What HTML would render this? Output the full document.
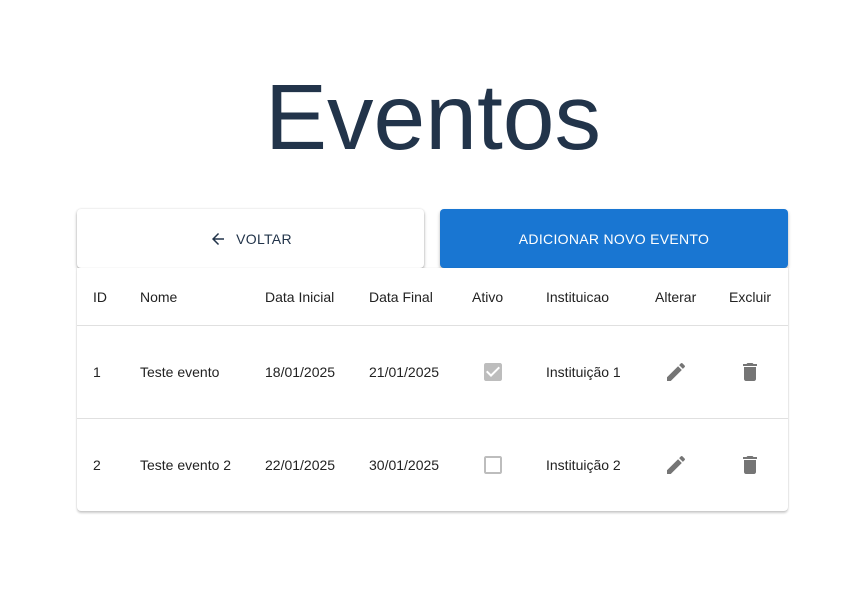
<!DOCTYPE html>
<html><head><style>
body{margin:0;width:854px;height:590px;background:#fff;font-family:"Liberation Sans",Arial,sans-serif;position:relative;overflow:hidden}
.t{position:absolute;left:6px;width:854px;text-align:center;top:62px;font-size:93px;line-height:110px;color:#22344a}
.btn{position:absolute;top:209px;height:59px;border-radius:4px;display:flex;align-items:center;justify-content:center;font-size:14px;letter-spacing:.3px}
.b1{left:77px;width:347px;background:#fff;color:#22344a;box-shadow:0 2px 3px rgba(0,0,0,.3),0 0 2px rgba(0,0,0,.12)}
.b2{left:440px;width:348px;background:#1976d2;color:#fff;box-shadow:0 2px 3px rgba(0,0,0,.3)}
.card{position:absolute;left:77px;top:268px;width:711px;height:243px;background:#fff;border-radius:0 0 4px 4px;box-shadow:0 2px 2px rgba(0,0,0,.2),0 0 1px rgba(0,0,0,.15)}
.c{position:absolute;font-size:14px;color:#222;transform:translateY(-50%)}
.line{position:absolute;left:0;width:711px;height:1px;background:#e0e0e0}
</style></head><body>
<div class="t">Eventos</div>
<div class="btn b1"><svg width="18" height="18" viewBox="0 0 24 24" style="margin-right:9px"><path fill="#22344a" d="M20 11H7.830l5.59-5.59L12 4l-8 8 8 8 1.41-1.41L7.83 13H20v-2z"/></svg>VOLTAR</div>
<div class="btn b2">ADICIONAR NOVO EVENTO</div>
<div class="card">
<div class="line" style="top:57px"></div>
<div class="line" style="top:150px"></div>
<div class="c" style="left:16px;top:29px">ID</div>
<div class="c" style="left:63px;top:29px">Nome</div>
<div class="c" style="left:188px;top:29px">Data Inicial</div>
<div class="c" style="left:292px;top:29px">Data Final</div>
<div class="c" style="left:395px;top:29px">Ativo</div>
<div class="c" style="left:469px;top:29px">Instituicao</div>
<div class="c" style="left:578px;top:29px">Alterar</div>
<div class="c" style="left:652px;top:29px">Excluir</div>

<div class="c" style="left:16px;top:104px">1</div>
<div class="c" style="left:63px;top:104px">Teste evento</div>
<div class="c" style="left:188px;top:104px">18/01/2025</div>
<div class="c" style="left:292px;top:104px">21/01/2025</div>
<svg class="c" style="left:404px;top:104px" width="24" height="24" viewBox="0 0 24 24"><path fill="#bdbdbd" d="M19 3H5c-1.11 0-2 .9-2 2v14c0 1.1.89 2 2 2h14c1.11 0 2-.9 2-2V5c0-1.1-.89-2-2-2zm-9 14l-5-5 1.41-1.41L10 14.17l7.59-7.59L19 8l-9 9z"/></svg>
<div class="c" style="left:469px;top:104px">Instituição 1</div>
<svg class="c" style="left:587px;top:104px" width="24" height="24" viewBox="0 0 24 24"><path fill="#757575" d="M3 17.25V21h3.75L17.81 9.94l-3.750-3.75L3 17.25zM20.71 7.04a1 1 0 000-1.41l-2.34-2.34a1 1 0 00-1.41 0l-1.83 1.83 3.75 3.75 1.83-1.83z"/></svg>
<svg class="c" style="left:661px;top:104px" width="24" height="24" viewBox="0 0 24 24"><path fill="#757575" d="M6 19c0 1.1.9 2 2 2h8c1.1 0 2-.9 2-2V7H6v12zM19 4h-3.5l-1-1h-5l-1 1H5v2h14V4z"/></svg>

<div class="c" style="left:16px;top:197px">2</div>
<div class="c" style="left:63px;top:197px">Teste evento 2</div>
<div class="c" style="left:188px;top:197px">22/01/2025</div>
<div class="c" style="left:292px;top:197px">30/01/2025</div>
<svg class="c" style="left:404px;top:197px" width="24" height="24" viewBox="0 0 24 24"><path fill="#bdbdbd" d="M19 5v14H5V5h14m0-2H5c-1.1 0-2 .9-2 2v14c0 1.1.9 2 2 2h14c1.1 0 2-.9 2-2V5c0-1.1-.9-2-2-2z"/></svg>
<div class="c" style="left:469px;top:197px">Instituição 2</div>
<svg class="c" style="left:587px;top:197px" width="24" height="24" viewBox="0 0 24 24"><path fill="#757575" d="M3 17.25V21h3.75L17.81 9.94l-3.75-3.75L3 17.25zM20.71 7.04a1 1 0 000-1.41l-2.34-2.34a1 1 0 00-1.41 0l-1.83 1.83 3.75 3.75 1.83-1.83z"/></svg>
<svg class="c" style="left:661px;top:197px" width="24" height="24" viewBox="0 0 24 24"><path fill="#757575" d="M6 19c0 1.1.9 2 2 2h8c1.1 0 2-.9 2-2V7H6v12zM19 4h-3.5l-1-1h-5l-1 1H5v2h14V4z"/></svg>
</div>
</body></html>
